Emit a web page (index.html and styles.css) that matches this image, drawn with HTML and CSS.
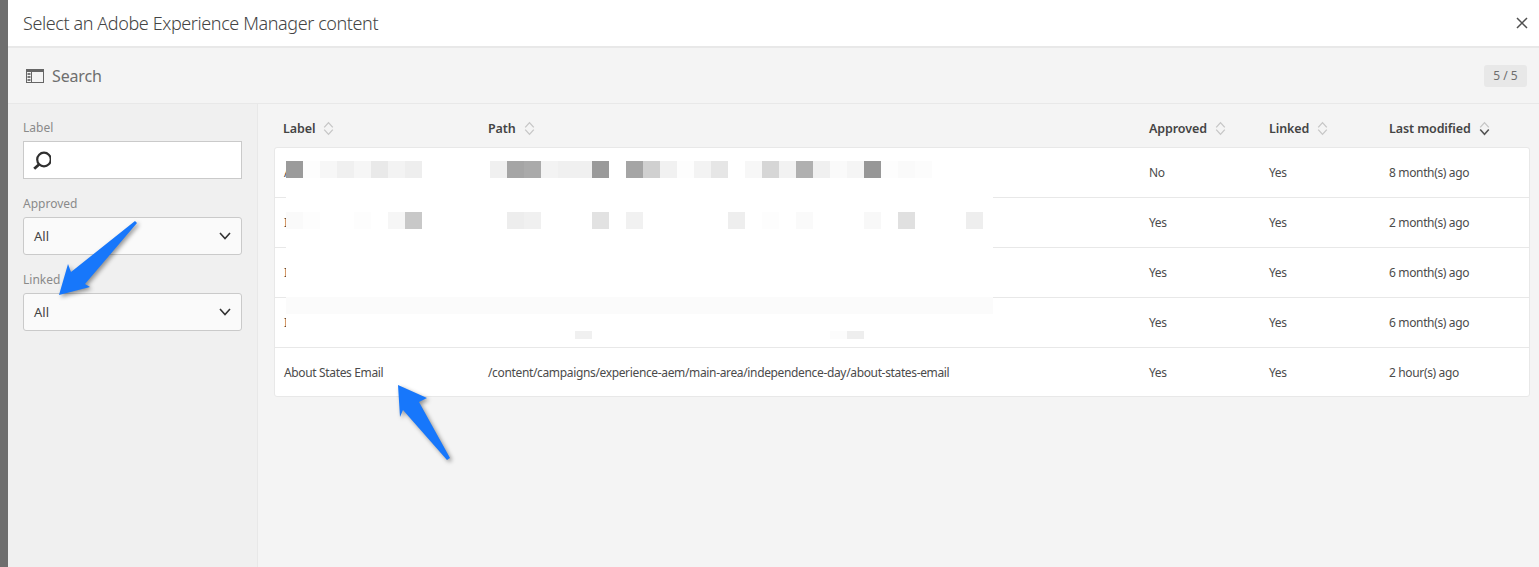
FILE: index.html
```html
<!DOCTYPE html>
<html>

<head>
	<meta charset="UTF-8">
	<title>Select content</title>
	<link rel="stylesheet" href="styles.css">
</head>

<body>

	<div class="page">
		<div class="strip"></div>

		<div class="dialog">
			<div class="dialog-head">
				<h1>Select an Adobe Experience Manager content</h1>
				<svg class="close" width="12" height="12" viewBox="0 0 12 12"><path d="M1 1L11 11M11 1L1 11" /></svg>
			</div>

			<div class="toolbar">
				<svg class="rail" width="18" height="14" viewBox="0 0 18 14">
					<rect x="0.5" y="0.5" width="17" height="13" />
					<path class="rail-top" d="M1 2H17" />
					<path d="M5.5 1V13" />
					<path class="rail-rows" d="M1.5 5H4.5M1.5 8H4.5M1.5 11H4.5" />
				</svg>
				<span class="toolbar-title">Search</span>
				<span class="count">5 / 5</span>
			</div>

			<div class="content">
				<div class="sidebar">
					<label>Label</label>
					<div class="field search-field">
						<svg width="18" height="19" viewBox="0 0 18 19"><circle cx="11" cy="8.5" r="6.8" /><path d="M6 13.5L1.2 17.8" class="handle" /></svg>
					</div>

					<label>Approved</label>
					<div class="field select-field">
						<span>All</span>
						<svg width="12" height="8" viewBox="0 0 12 8"><path d="M1 1L6 6.5L11 1" /></svg>
					</div>

					<label>Linked</label>
					<div class="field select-field">
						<span>All</span>
						<svg width="12" height="8" viewBox="0 0 12 8"><path d="M1 1L6 6.5L11 1" /></svg>
					</div>
				</div>

				<div class="main">
					<div class="row head-row">
						<div class="col-label">Label <svg class="sort" viewBox="0 0 10 14"><path d="M1 6L5 1.5L9 6M1 8L5 12.5L9 8" /></svg></div>
						<div>Path <svg class="sort" viewBox="0 0 10 14"><path d="M1 6L5 1.5L9 6M1 8L5 12.5L9 8" /></svg></div>
						<div>Approved <svg class="sort" viewBox="0 0 10 14"><path d="M1 6L5 1.5L9 6M1 8L5 12.5L9 8" /></svg></div>
						<div>Linked <svg class="sort" viewBox="0 0 10 14"><path d="M1 6L5 1.5L9 6M1 8L5 12.5L9 8" /></svg></div>
						<div>Last modified <svg class="sort" viewBox="0 0 10 14"><path d="M1 6L5 1.5L9 6" /><path class="active" d="M1 8L5 12.5L9 8" /></svg></div>
					</div>

					<div class="card">
						<div class="row"><div class="cell-label">A</div><div></div><div>No</div><div>Yes</div><div>8 month(s) ago</div></div>
						<div class="row"><div class="cell-label">I</div><div></div><div>Yes</div><div>Yes</div><div>2 month(s) ago</div></div>
						<div class="row"><div class="cell-label">I</div><div></div><div>Yes</div><div>Yes</div><div>6 month(s) ago</div></div>
						<div class="row"><div class="cell-label">I</div><div></div><div>Yes</div><div>Yes</div><div>6 month(s) ago</div></div>
						<div class="row last"><div class="cell-label">About States Email</div><div>/content/campaigns/experience-aem/main-area/independence-day/about-states-email</div><div>Yes</div><div>Yes</div><div>2 hour(s) ago</div></div>

						<!-- pixelated part of the screenshot, coordinates are page pixels -->
						<svg class="mosaic" width="707" height="187" viewBox="286 153 707 187">
							<rect x="286" y="153" width="707" height="187" fill="#fff" />

							<rect x="286" y="161" width="17" height="17" fill="#9b9b9b" />
							<rect x="303" y="161" width="17" height="17" fill="#fdfdfd" />
							<rect x="320" y="161" width="17" height="17" fill="#f7f7f7" />
							<rect x="337" y="161" width="17" height="17" fill="#f0f0f0" />
							<rect x="354" y="161" width="17" height="17" fill="#f6f6f6" />
							<rect x="371" y="161" width="17" height="17" fill="#e9e9e9" />
							<rect x="388" y="161" width="17" height="17" fill="#f3f3f3" />
							<rect x="405" y="161" width="17" height="17" fill="#eeeeee" />
							<rect x="490" y="161" width="17" height="17" fill="#f0f0f0" />
							<rect x="507" y="161" width="17" height="17" fill="#a5a5a5" />
							<rect x="524" y="161" width="17" height="17" fill="#aaaaaa" />
							<rect x="541" y="161" width="17" height="17" fill="#f3f3f3" />
							<rect x="558" y="161" width="34" height="17" fill="#f0f0f0" />
							<rect x="592" y="161" width="17" height="17" fill="#9a9a9a" />
							<rect x="626" y="161" width="17" height="17" fill="#a5a5a5" />
							<rect x="643" y="161" width="17" height="17" fill="#d0d0d0" />
							<rect x="660" y="161" width="17" height="17" fill="#f1f1f1" />
							<rect x="677" y="161" width="17" height="17" fill="#fdfdfd" />
							<rect x="694" y="161" width="17" height="17" fill="#f3f3f3" />
							<rect x="711" y="161" width="17" height="17" fill="#e6e6e6" />
							<rect x="745" y="161" width="17" height="17" fill="#f7f7f7" />
							<rect x="762" y="161" width="17" height="17" fill="#d6d6d6" />
							<rect x="779" y="161" width="17" height="17" fill="#f2f2f2" />
							<rect x="796" y="161" width="17" height="17" fill="#b0b0b0" />
							<rect x="813" y="161" width="17" height="17" fill="#f0f0f0" />
							<rect x="830" y="161" width="17" height="17" fill="#fafafa" />
							<rect x="847" y="161" width="17" height="17" fill="#f5f5f5" />
							<rect x="864" y="161" width="17" height="17" fill="#979797" />
							<rect x="881" y="161" width="17" height="17" fill="#fdfdfd" />
							<rect x="898" y="161" width="17" height="17" fill="#fafafa" />
							<rect x="915" y="161" width="17" height="17" fill="#fcfcfc" />

							<rect x="286" y="212" width="17" height="17" fill="#fafafa" />
							<rect x="303" y="212" width="17" height="17" fill="#fdfdfd" />
							<rect x="354" y="212" width="17" height="17" fill="#fdfdfd" />
							<rect x="388" y="212" width="17" height="17" fill="#f6f6f6" />
							<rect x="405" y="212" width="17" height="17" fill="#c8c8c8" />
							<rect x="507" y="212" width="17" height="17" fill="#ededed" />
							<rect x="524" y="212" width="17" height="17" fill="#f0f0f0" />
							<rect x="592" y="212" width="17" height="17" fill="#e2e2e2" />
							<rect x="626" y="212" width="17" height="17" fill="#f1f1f1" />
							<rect x="728" y="212" width="17" height="17" fill="#eeeeee" />
							<rect x="762" y="212" width="17" height="17" fill="#fdfdfd" />
							<rect x="796" y="212" width="17" height="17" fill="#fafafa" />
							<rect x="864" y="212" width="17" height="17" fill="#f8f8f8" />
							<rect x="898" y="212" width="17" height="17" fill="#e0e0e0" />
							<rect x="966" y="212" width="17" height="17" fill="#eeeeee" />

							<rect x="286" y="297" width="707" height="17" fill="#fbfbfb" />

							<rect x="575" y="331" width="17" height="8" fill="#f0f0f0" />
							<rect x="830" y="331" width="17" height="8" fill="#fcfcfc" />
							<rect x="847" y="331" width="17" height="8" fill="#eeeeee" />
						</svg>
					</div>
				</div>
			</div>
		</div>
	</div>

	<!-- annotation arrows drawn on top of the screenshot -->
	<svg class="arrows" width="1539" height="567" viewBox="0 0 1539 567">
		<polygon points="59,295 68,264 71,272 135,221 137,223 85,284 90,287" />
		<polygon points="398,385 427,398 419,402 450,458 447,460 403,410 400,417" />
	</svg>

</body>

</html>
```

FILE: styles.css
```css
* { box-sizing: border-box; }

body {
	margin: 0;
	height: 567px;
	overflow: hidden;
	font-family: "Noto Sans", "Liberation Sans", sans-serif;
	color: #4b4b4b;
	background-color: #f4f4f4;
}

.page {
	display: flex;
	height: 567px;
}

.strip {
	width: 8px;
	flex-shrink: 0;
	background-color: #6e6e6e;
}

.dialog {
	flex: 1;
	display: flex;
	flex-direction: column;
	min-width: 0;
}

/* header */
.dialog-head {
	height: 48px;
	padding: 0 11px 0 15px;
	display: flex;
	align-items: center;
	justify-content: space-between;
	background-color: #fff;
	border-bottom: 2px solid #e8e8e8;
}

.dialog-head h1 {
	margin: 0;
	font-size: 18px;
	font-weight: 300;
	color: #444;
	letter-spacing: -0.4px;
}

.close path {
	fill: none;
	stroke: #505050;
	stroke-width: 1.5;
}

/* toolbar */
.toolbar {
	height: 56px;
	padding: 0 12px 0 18px;
	display: flex;
	align-items: center;
	background-color: #f4f4f4;
	border-bottom: 1px solid #e8e8e8;
}

.rail rect, .rail path {
	fill: none;
	stroke: #666;
	stroke-width: 1;
}

.rail .rail-top { stroke-width: 2; }

.rail .rail-rows {
	stroke: #777;
	stroke-width: 2;
}

.toolbar-title {
	margin-left: 8px;
	font-size: 16px;
	letter-spacing: -0.15px;
	color: #6e6e6e;
}

.count {
	margin-left: auto;
	width: 43px;
	height: 22px;
	line-height: 22px;
	text-align: center;
	font-size: 12px;
	color: #6e6e6e;
	background-color: #e8e8e8;
	border-radius: 3px;
}

.content {
	flex: 1;
	display: flex;
	min-height: 0;
}

/* sidebar */
.sidebar {
	width: 250px;
	flex-shrink: 0;
	padding: 15px 15px 0 15px;
	background-color: #f0f0f0;
	border-right: 1px solid #e8e8e8;
}

.sidebar label {
	display: block;
	height: 22px;
	line-height: 18px;
	font-size: 12px;
	color: #8a8a8a;
}

.field {
	width: 219px;
	height: 38px;
	margin-bottom: 16px;
	display: flex;
	align-items: center;
	border: 1px solid #cacaca;
}

.search-field {
	padding-left: 9px;
	background-color: #fff;
}

.search-field circle, .search-field path {
	fill: none;
	stroke: #2f2f2f;
	stroke-width: 2.2;
}

.search-field .handle { stroke-width: 2.8; }

.select-field {
	justify-content: space-between;
	padding: 0 10px;
	font-size: 13px;
	color: #444;
	background-color: #fafafa;
	border-radius: 3px;
}

.select-field path {
	fill: none;
	stroke: #333;
	stroke-width: 1.6;
}

/* results */
.main {
	flex: 1;
	min-width: 0;
	padding: 0 9px 0 16px;
	background-color: #f4f4f4;
}

.row {
	display: grid;
	grid-template-columns: 213px 661px 120px 120px 1fr;
	align-items: center;
	height: 50px;
	font-size: 12px;
	letter-spacing: -0.35px;
	color: #4b4b4b;
	border-bottom: 1px solid #e8e8e8;
}

.row.last {
	height: 48px;
	border-bottom: none;
}

.head-row {
	grid-template-columns: 214px 661px 120px 120px 1fr;
	height: 43px;
	padding-top: 6px;
	font-size: 12.5px;
	font-weight: 600;
	letter-spacing: -0.1px;
	color: #444;
	border-bottom: none;
}

.col-label { padding-left: 9px; }
.cell-label { padding-left: 9px; }

.sort {
	width: 11px;
	height: 15px;
	margin-left: 5px;
	vertical-align: -3px;
}

.sort path {
	fill: none;
	stroke: #c6c6c6;
	stroke-width: 1.2;
}

.sort .active {
	stroke: #555;
	stroke-width: 1.5;
}

.card {
	position: relative;
	background-color: #fff;
	border: 1px solid #e8e8e8;
	border-radius: 3px;
}

.mosaic {
	position: absolute;
	left: 11px;
	top: 5px;
}

.arrows {
	position: absolute;
	left: 0;
	top: 0;
	pointer-events: none;
}

.arrows polygon {
	fill: #1777fb;
	filter: drop-shadow(2px 2px 2px rgba(0, 0, 0, 0.4));
}
```
